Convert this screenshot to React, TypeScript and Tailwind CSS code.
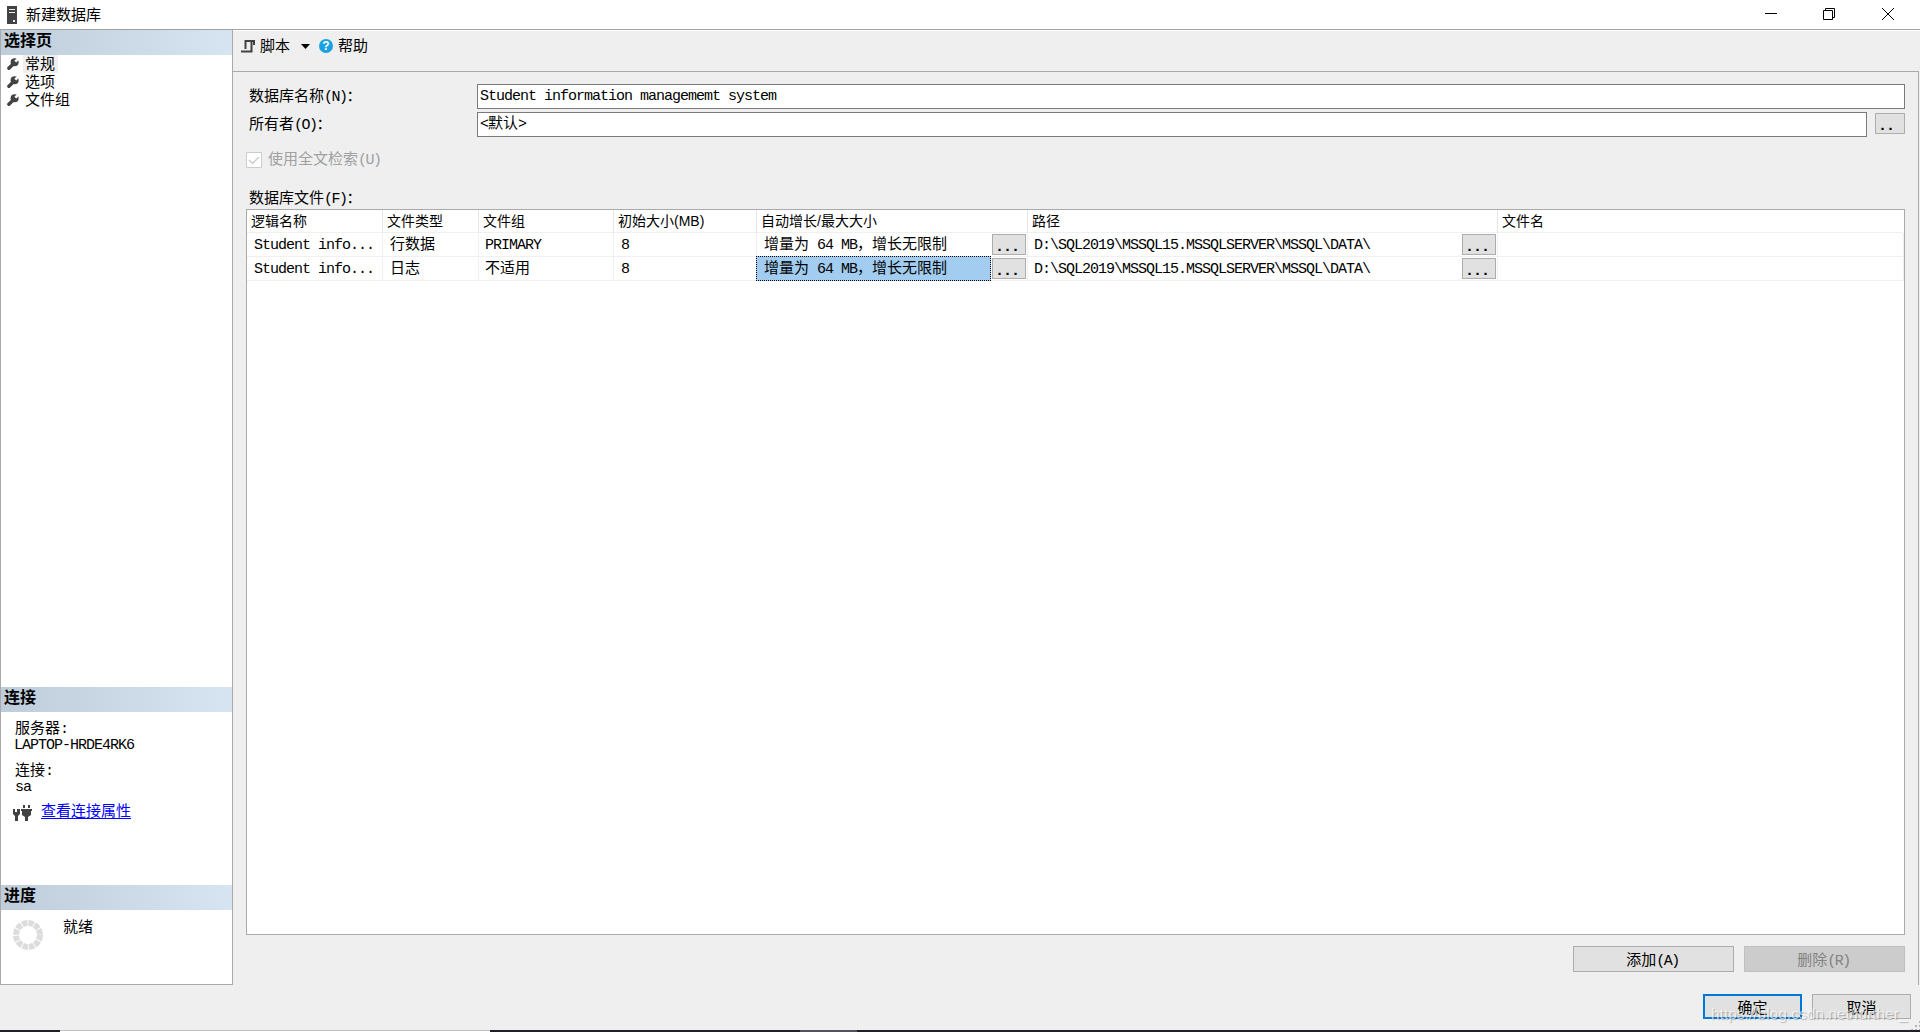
import React from 'react';

interface DatabaseFile {
    name: string;
    type: string;
    group: string;
    size: string;
    growth: string;
    path: string;
    selected: boolean;
}

const files: DatabaseFile[] = [
    { name: 'Student info...', type: '行数据', group: 'PRIMARY', size: '8', growth: '增量为 64 MB，增长无限制', path: 'D:\\SQL2019\\MSSQL15.MSSQLSERVER\\MSSQL\\DATA\\', selected: false },
    { name: 'Student info...', type: '日志', group: '不适用', size: '8', growth: '增量为 64 MB，增长无限制', path: 'D:\\SQL2019\\MSSQL15.MSSQLSERVER\\MSSQL\\DATA\\', selected: true },
];

const headers = ['逻辑名称', '文件类型', '文件组', '初始大小(MB)', '自动增长/最大大小', '路径', '文件名'];
const pages = ['常规', '选项', '文件组'];

// Half-width runs are set on an 8px pitch (7.5px when tight), full-width characters on a 15px one
const Mixed: React.FC<{ text: string, tight?: boolean }> = ({ text, tight }) => (
    <span className="whitespace-pre">
        {text.split(/([\x20-\x7e]+)/).filter(Boolean).map((run, i) =>
            /^[\x20-\x7e]/.test(run)
                ? <span key={i} className={`font-['Liberation_Mono',monospace] ${tight ? 'tracking-[-1.5px]' : 'tracking-[-1px]'}`}>{run}</span>
                : <span key={i}>{run}</span>
        )}
    </span>
);

const WrenchIcon = () => (
    <svg className="w-3 h-3 shrink-0" viewBox="0 0 12 12">
        <circle cx="7.6" cy="4.2" r="4" fill="#424242" />
        <path d="M1.900 10.200 6.500 5.800" stroke="#424242" strokeWidth="3.400" strokeLinecap="round" />
        <path d="M8.300 3.600 12 0" stroke="#fff" strokeWidth="2.600" />
    </svg>
);

const PanelHeader: React.FC<{ title: string }> = ({ title }) => (
    <div className="h-[25px] shrink-0 pl-[3px] bg-linear-to-r from-[#bfcddb] to-[#d7e4f2] font-bold text-base leading-[19px]">
        {title}
    </div>
);

const DotsButton: React.FC<{ className: string; dots?: string }> = ({ className, dots = '...' }) => (
    <button className={`h-[21px] shrink-0 border border-[#adadad] bg-[#e1e1e1] text-left pl-0.5 leading-[19px] font-bold ${className}`}>
        <Mixed text={dots} />
    </button>
);

const Sidebar = () => (
    <div className="w-[233px] h-[955px] shrink-0 flex flex-col bg-white border-x border-b border-[#a9a9ae]">
        <PanelHeader title="选择页" />
        <div className="h-[632px]">
            {pages.map((page, i) => (
                <div key={page} className="h-[18px] flex items-center pl-1.5">
                    <WrenchIcon />
                    <span className={`h-[18px] ml-1 pl-0.5 pr-[3px] leading-[15px] ${i === 0 ? 'bg-[#efefef]' : ''}`}>{page}</span>
                </div>
            ))}
        </div>
        <PanelHeader title="连接" />
        <div className="h-[173px] pl-3.5 pt-[7px]">
            <div className="h-4 leading-4"><Mixed text="服务器:" /></div>
            <div className="h-[26px] leading-4 -ml-px"><Mixed text="LAPTOP-HRDE4RK6" /></div>
            <div className="h-4 leading-4"><Mixed text="连接:" /></div>
            <div className="h-[25px] leading-4"><Mixed text="sa" /></div>
            <div className="flex items-center h-4 -ml-0.5">
                <svg className="w-5 h-[17px] mt-1" viewBox="0 0 20 17" fill="#424242">
                    <path d="M0 5h2v3h2V5h3v5L5 12v5H2v-5L0 10zM8 5h11v2h-1v4l-3 2v4h-3v-4l-3-2V7H8zM10 1h2v3h-2zM15 1h2v3h-2z" />
                </svg>
                <span className="ml-2 text-[#0000ff] underline underline-offset-2">查看连接属性</span>
            </div>
        </div>
        <PanelHeader title="进度" />
        <div className="flex pl-3 pt-2.5">
            <svg className="w-[30px] h-[30px]" viewBox="0 0 30 30">
                <circle cx="15" cy="15" r="12" fill="none" stroke="#dcdcdc" strokeWidth="6" strokeDasharray="5.283 1" />
            </svg>
            <span className="ml-5 leading-3">就绪</span>
        </div>
    </div>
);

const FileTable = () => (
    <div className="h-[726px] bg-white border border-[#a9a9ae]">
        <div className="grid grid-cols-[136px_96px_135px_143px_271px_470px_406px] h-[23px] border-b border-[#f0f0f0] font-['Liberation_Sans','Noto_Sans_CJK_SC',sans-serif] text-sm leading-[23px]">
            {headers.map(header => (
                <div key={header} className="pl-1 border-r border-[#e5e5e5] last:border-white">{header}</div>
            ))}
        </div>
        {files.map(file => (
            <div key={file.type} className="grid grid-cols-[136px_96px_135px_143px_271px_470px_406px] h-6 border-b border-[#f0f0f0] leading-5 [&>div]:border-r [&>div]:border-[#f0f0f0]">
                <div className="pl-[7px]"><Mixed text={file.name} /></div>
                <div className="pl-[7px]"><Mixed text={file.type} /></div>
                <div className="pl-1.5"><Mixed text={file.group} /></div>
                <div className="pl-[7px]"><Mixed text={file.size} /></div>
                <div className="flex">
                    <div className={`w-[235px] pl-[7px] ${file.selected ? 'h-[25px] -mt-px -ml-px mr-px bg-[#a2cdf0] border border-dotted border-black' : ''}`}>
                        <Mixed text={file.growth} />
                    </div>
                    <DotsButton className="w-[34px] mt-px" />
                </div>
                <div className="flex justify-between pl-1.5 pr-px">
                    <Mixed text={file.path} />
                    <DotsButton className="w-[34px] mt-px" />
                </div>
                <div />
            </div>
        ))}
    </div>
);

const App = () => (
    <div className="w-[1920px] h-[1032px] flex flex-col overflow-hidden relative bg-[#efefef] text-black text-[15px] font-['Noto_Sans_CJK_SC',sans-serif]">
        <div className="h-[30px] shrink-0 flex items-center bg-white border-b border-[#a0a3a2]">
            <svg className="ml-[7px] w-2.5 h-[18px]" viewBox="0 0 10 18">
                <path fill="#424242" d="M0 0h10v18H0z" />
                <path fill="#f0f0f0" d="M2 3h6v1H2zM2 6h6v1H2zM6 14h2v2H6z" />
            </svg>
            <span className="ml-[9px]">新建数据库</span>
            <svg className="ml-auto mr-[25px] w-[131px] h-[13px]" viewBox="0 0 131 13" fill="none" stroke="#000">
                <path d="M1 5.500h12M59.500 2.500h9v9h-9zM61.500 2.500v-2h9v9h-2M118 0l12 12M130 0l-12 12" />
            </svg>
        </div>
        <div className="flex h-[955px]">
            <Sidebar />
            <div className="flex-1 border-t border-white">
                <div className="h-10 flex items-center pl-2 pb-[11px]">
                    <svg className="w-3.5 h-[13px] mt-px" viewBox="0 0 14 13" fill="none" stroke="#424242" strokeWidth="2">
                        <path d="M13 5V1H4.500v8M10.500 1v10.500H0" />
                    </svg>
                    <span className="ml-[5px] -mt-px">脚本</span>
                    <svg className="ml-[11px] mt-0.5 w-[9px] h-[5px]" viewBox="0 0 9 5"><path d="M0 0h9L4.500 5z" /></svg>
                    <span className="ml-[9px] mt-px w-3.5 h-3.5 rounded-full bg-[#1ba1e2] text-white font-bold text-xs leading-3.5 text-center font-['Liberation_Sans',sans-serif]">?</span>
                    <span className="ml-[5px] -mt-px">帮助</span>
                </div>
                <div className="h-[914px] mr-px border-t border-r border-[#a9a9ae] pl-[13px] pr-[13px] pt-3">
                    <div className="flex h-[25px] mb-[3px]">
                        <label className="w-[231px] pl-[3px] leading-[21px]"><Mixed text="数据库名称(N)：" tight /></label>
                        <div className="flex-1 border border-[#7a7a7a] bg-white pl-0.5 leading-[18px]"><Mixed text="Student information managememt system" /></div>
                    </div>
                    <div className="flex h-[25px]">
                        <label className="w-[231px] pl-[3px] leading-[21px]"><Mixed text="所有者(O)：" tight /></label>
                        <div className="flex-1 border border-[#7a7a7a] bg-white pl-0.5 leading-[18px]"><Mixed text="<默认>" /></div>
                        <DotsButton className="w-[30px] ml-2 mt-px" dots=".." />
                    </div>
                    <div className="flex items-center mt-[15px] h-4 text-[#a0a0a0]">
                        <svg className="w-4 h-4" viewBox="0 0 16 16" fill="#fff" stroke="#ccc">
                            <path d="M.5.5h15v15H.5z" />
                            <path d="M3 8l3.500 3.500L13 5" strokeWidth="1.500" fill="none" />
                        </svg>
                        <span className="ml-1.5 -mt-px"><Mixed text="使用全文检索(U)" tight /></span>
                    </div>
                    <div className="mt-[17px] h-6 pl-[3px] leading-6"><Mixed text="数据库文件(F)：" tight /></div>
                    <FileTable />
                    <div className="flex justify-end gap-2.5 mt-[11px]">
                        <button className="w-[161px] h-[26px] pr-0.5 border border-[#adadad] bg-[#e1e1e1] leading-[23px]"><Mixed text="添加(A)" tight /></button>
                        <button className="w-[161px] h-[26px] pr-0.5 border border-[#bfbfbf] bg-[#cccccc] text-[#838383] leading-[23px]"><Mixed text="删除(R)" tight /></button>
                    </div>
                </div>
            </div>
        </div>
        <div className="flex justify-end gap-2.5 pr-[9px] pt-[9px] h-[45px]">
            <button className="w-[99px] h-[25px] border-2 border-[#0078d7] bg-[#e1e1e1] leading-[21px]">确定</button>
            <button className="w-[99px] h-[25px] border border-[#adadad] bg-[#e1e1e1] leading-[23px]">取消</button>
        </div>
        <div className="flex h-0.5 bg-[#1f1f27]">
            <div className="w-[430px] ml-[60px] bg-white border-t border-[#c0c0c0]" />
            <div className="w-[57px] ml-[310px] bg-[#50515a]" />
        </div>
        <span className="absolute left-[1711px] top-[1004px] text-[15.5px] leading-5 text-white/70 whitespace-nowrap font-['Liberation_Sans',sans-serif] [text-shadow:1px_1px_1px_rgba(0,0,0,0.25)]">https://blog.csdn.net/further_</span>
        <svg className="absolute left-[1911px] top-[1021px] w-[9px] h-[9px]" viewBox="0 0 9 9" fill="#b4b4b4">
            <path d="M8 0h1v2H8zM4 4h2v2H4zM8 4h1v2H8zM0 8h2v1H0zM4 8h2v1H4zM8 8h1v1H8z" />
        </svg>
    </div>
);

export default App;
